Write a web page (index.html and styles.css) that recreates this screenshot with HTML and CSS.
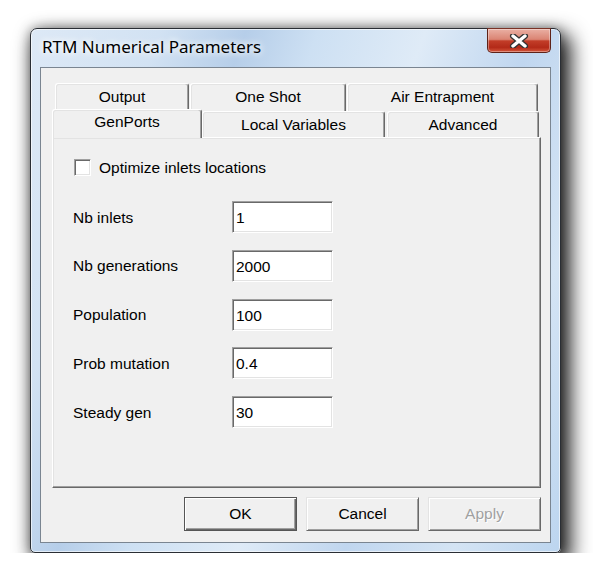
FILE: index.html
```html
<!DOCTYPE html>
<html>
<head>
<meta charset="utf-8">
<title>RTM Numerical Parameters</title>
<link rel="stylesheet" href="styles.css">
</head>
<body>
<div class="desktop">
  <div class="window">
    <div class="titlebar">
      <span class="title">RTM Numerical Parameters</span>
      <div class="close">
        <svg width="20" height="14" viewBox="0 0 20 14">
          <path d="M4 2 L16 12 M16 2 L4 12" stroke="#333333" stroke-width="6" stroke-linecap="round" fill="none"/>
          <path d="M4 2 L16 12 M16 2 L4 12" stroke="#ffffff" stroke-width="3.4" stroke-linecap="round" fill="none"/>
        </svg>
      </div>
    </div>
    <div class="client">
      <div class="tabctl">
        <div class="tabrow back">
          <div class="tab t-output">Output</div>
          <div class="tab t-oneshot">One Shot</div>
          <div class="tab t-air">Air Entrapment</div>
        </div>
        <div class="tabrow front">
          <div class="tab t-genports selected">GenPorts</div>
          <div class="tab t-local">Local Variables</div>
          <div class="tab t-adv">Advanced</div>
        </div>
        <div class="panel">
          <label class="check">
            <input type="checkbox" class="checkbox">
            <span>Optimize inlets locations</span>
          </label>
          <div class="fields">
            <span class="label">Nb inlets</span><input class="edit" type="text" value="1">
            <span class="label">Nb generations</span><input class="edit" type="text" value="2000">
            <span class="label">Population</span><input class="edit" type="text" value="100">
            <span class="label">Prob mutation</span><input class="edit" type="text" value="0.4">
            <span class="label">Steady gen</span><input class="edit" type="text" value="30">
          </div>
        </div>
      </div>
      <div class="buttons">
        <button class="btn default">OK</button>
        <button class="btn">Cancel</button>
        <button class="btn disabled">Apply</button>
      </div>
    </div>
  </div>
</div>
</body>
</html>
```

FILE: styles.css
```css
html, body {
  margin: 0;
  padding: 0;
  background: #ffffff;
}

.desktop {
  padding: 28px 0 0 30px;
}

.window {
  box-sizing: border-box;
  width: 531px;
  height: 525px;
  border: 1px solid #2a2e34;
  border-radius: 7px 7px 5px 5px;
  padding: 0 9px 9px 9px;
  display: flex;
  flex-direction: column;
  background: linear-gradient(110deg, #dde9f6 0%, #d2e2f3 18%, #b6cee9 30%, #cde0f3 40%, #dfebf7 55%, #c0d6ef 70%, #d4e4f4 85%, #bcd5ef 100%);
  box-shadow: inset 0 0 0 1px rgba(255, 255, 255, 0.6), 7px 9px 20px 3px rgba(0, 0, 0, 0.85), 0 0 12px rgba(0, 0, 0, 0.35);
}

.titlebar {
  height: 38px;
  display: flex;
  justify-content: space-between;
  align-items: flex-start;
}

.title {
  font-family: "Noto Sans", "Open Sans", sans-serif;
  font-size: 17px;
  line-height: 20px;
  color: #000;
  margin: 8px 0 0 2px;
  text-shadow: 0 0 6px #fff, 0 0 10px #fff;
}

.close {
  box-sizing: border-box;
  width: 64px;
  height: 25px;
  margin-top: -1px;
  border: 1px solid #5e2218;
  border-top-color: #7a3226;
  border-radius: 0 0 5px 5px;
  background: linear-gradient(180deg, #eab0a4 0%, #da8473 45%, #c23d28 52%, #b32a18 80%, #d4563b 100%);
  box-shadow: inset 0 0 0 1px rgba(255, 255, 255, 0.35);
  display: flex;
  align-items: center;
  justify-content: center;
}

.client {
  flex: 1;
  border: 1px solid #7a8591;
  background: #f0f0f0;
  font-family: "Liberation Sans", Arial, sans-serif;
  font-size: 15.5px;
  color: #000;
  padding: 15px 9px 0 11px;
  display: flex;
  flex-direction: column;
}

.tabctl {
  width: 489px;
}

.tabrow {
  display: flex;
  gap: 1px;
}

.tabrow.back {
  margin-left: 3px;
  height: 28px;
}

.tabrow.front {
  height: 26px;
  align-items: flex-end;
}

.tab {
  box-sizing: border-box;
  height: 100%;
  border-top: 1px solid #ffffff;
  border-left: 1px solid #ffffff;
  border-right: 1px solid #696969;
  border-radius: 3px 3px 0 0;
  box-shadow: inset -1px 0 #a0a0a0, inset 1px 1px #e3e3e3;
  background: #f0f0f0;
  display: flex;
  justify-content: center;
  padding-top: 4px;
  line-height: 18px;
}

.t-output { width: 134px; }
.t-oneshot { width: 156px; }
.t-air { width: 191px; }

.t-genports { width: 150px; }
.t-local { width: 183px; }
.t-adv { width: 152px; margin-left: 1px; }

.tab.selected {
  position: relative;
  z-index: 1;
  height: 29px;
  margin-bottom: -1px;
  margin-right: -1px;
  padding-top: 3px;
}

.panel {
  box-sizing: border-box;
  height: 351px;
  border-top: 1px solid #ffffff;
  border-left: 1px solid #ffffff;
  border-right: 1px solid #696969;
  border-bottom: 1px solid #696969;
  box-shadow: inset -1px -1px #a0a0a0, inset 1px 1px #e3e3e3;
  padding: 21px 0 0 20px;
}

.check {
  display: flex;
  align-items: center;
  gap: 8px;
  margin-left: 1px;
  height: 17px;
  line-height: 17px;
}

.checkbox {
  appearance: none;
  -webkit-appearance: none;
  box-sizing: border-box;
  width: 17px;
  height: 17px;
  margin: 0;
  background: #fff;
  border: 1px solid;
  border-color: #a0a0a0 #ffffff #ffffff #a0a0a0;
  box-shadow: inset 1px 1px #696969, inset -1px -1px #e3e3e3;
}

.fields {
  margin-top: 25px;
  display: grid;
  grid-template-columns: 159px 101px;
  grid-auto-rows: 32px;
  row-gap: 16.75px;
  align-items: center;
}

.label {
  line-height: 18px;
  padding-top: 1px;
}

.edit {
  box-sizing: border-box;
  width: 101px;
  height: 32px;
  margin: 0;
  padding: 2px 3px 0 3px;
  font: inherit;
  line-height: 18px;
  color: #000;
  background: #fff;
  border: 1px solid;
  border-color: #a0a0a0 #ffffff #ffffff #a0a0a0;
  box-shadow: inset 1px 1px #696969, inset -1px -1px #e3e3e3;
  outline: none;
  vertical-align: top;
}

.buttons {
  margin-top: 9px;
  display: flex;
  justify-content: flex-end;
  gap: 9px;
}

.btn {
  box-sizing: border-box;
  width: 113px;
  height: 34px;
  margin: 0;
  padding: 0;
  font: inherit;
  color: #000;
  background: #f0f0f0;
  border: 1px solid;
  border-color: #e3e3e3 #696969 #696969 #e3e3e3;
  box-shadow: inset 1px 1px #ffffff, inset -1px -1px #a0a0a0;
  appearance: none;
  -webkit-appearance: none;
}

.btn.default {
  border: 1px solid #555555;
  box-shadow: inset 1px 1px #ffffff, inset -1px -1px #696969, inset -2px -2px #a0a0a0;
}

.btn.disabled {
  color: #a0a0a0;
  text-shadow: 1px 1px #ffffff;
}
```
